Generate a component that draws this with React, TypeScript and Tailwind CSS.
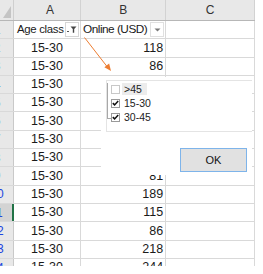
import React from "react";

const rows = [
  { n: 2, a: "15-30", b: "118" },
  { n: 3, a: "15-30", b: "86" },
  { n: 4, a: "15-30", b: "132" },
  { n: 5, a: "15-30", b: "97" },
  { n: 6, a: "15-30", b: "154" },
  { n: 7, a: "15-30", b: "120" },
  { n: 8, a: "15-30", b: "143" },
  { n: 9, a: "15-30", b: "81" },
  { n: 10, a: "15-30", b: "189" },
  { n: 11, a: "15-30", b: "115" },
  { n: 12, a: "15-30", b: "86" },
  { n: 13, a: "15-30", b: "218" },
  { n: 14, a: "15-30", b: "244" },
];

function FilterIcon() {
  return (
    <svg width="10" height="9" viewBox="0 0 10 9">
      <rect x="0" y="6" width="2" height="1" fill="#555" />
      <path d="M3.5 1.5h6l-2.3 2.6v3.6h-1.4V4.1z" fill="#444" />
    </svg>
  );
}

function Caret() {
  return (
    <svg width="7" height="4" viewBox="0 0 7 4">
      <path d="M0.5 0.5h6l-3 3z" fill="#7a7a7a" />
    </svg>
  );
}

function Check({ on }: { on: boolean }) {
  return (
    <span
      className={
        "flex h-[9px] w-[9px] shrink-0 items-center justify-center border bg-white " +
        (on ? "border-[#9a9a9a]" : "border-[#c8c8c8]")
      }
    >
      {on && (
        <svg width="7" height="6" viewBox="0 0 7 6">
          <path d="M0.8 3.1l1.8 1.8L6.2 1" stroke="#111" strokeWidth="1.5" fill="none" />
        </svg>
      )}
    </span>
  );
}

export default function App() {
  return (
    <div className="relative h-[274px] w-[263px] overflow-hidden bg-white font-['Liberation_Sans',Arial,sans-serif] text-[12.5px] text-[#1a1a1a]">
      {/* sheet */}
      <div className="h-[266px] w-[255px] overflow-hidden">
        <div className="ml-[-19px] flex flex-col">
          {/* column headers */}
          <div className="flex h-[21px] border-b border-[#b7b7b7] bg-[#e8e8e8] text-[12px] text-[#333]">
            <div className="relative w-[36px] border-r border-[#cfcfcf]">
              <svg className="absolute right-[2px] bottom-[2px]" width="8" height="12" viewBox="0 0 8 12">
                <path d="M8 0v12H0z" fill="#c4c4c4" />
              </svg>
            </div>
            <div className="flex w-[73px] items-center justify-center border-r border-[#d2d2d2] pl-[6px]">A</div>
            <div className="flex w-[93px] items-center justify-center border-r border-[#d2d2d2]">B</div>
            <div className="flex w-[97px] items-center justify-center border-r border-[#d2d2d2]">C</div>
          </div>

          {/* row 1: table header with filters */}
          <div className="flex h-[18.3px] border-b border-[#d9d9d9] whitespace-nowrap">
            <div className="flex w-[36px] items-center justify-center border-r border-[#c9c9c9] bg-[#e8e8e8] text-[12px] text-[#2046e0]">1</div>
            <div className="flex w-[73px] items-center justify-between border-r border-[#d9d9d9] pl-[3px] pr-[1px]">
              <span className="text-[11.4px] tracking-[-0.3px]">Age class</span>
              <span className="flex h-[15px] w-[14px] shrink-0 items-center justify-center border border-[#d6d6d6] bg-white">
                <FilterIcon />
              </span>
            </div>
            <div className="flex w-[93px] items-center justify-between overflow-hidden border-r border-[#d9d9d9] pl-[2px] pr-[1px]">
              <span className="text-[11.8px] tracking-[-0.5px]">Online (USD)</span>
              <span className="flex h-[15px] w-[14px] shrink-0 items-center justify-center border border-[#e0e0e0] bg-white">
                <Caret />
              </span>
            </div>
            <div className="w-[97px] border-r border-[#d9d9d9]" />
          </div>

          {rows.map((r) => {
            const active = r.n === 11;
            return (
              <div key={r.n} className="flex h-[18.3px] border-b border-[#d9d9d9]">
                <div
                  className={
                    "flex w-[36px] items-center justify-center text-[12px] text-[#2046e0] " +
                    (active
                      ? "border-r-2 border-[#217346] bg-[#d3d3d3]"
                      : "border-r border-[#c9c9c9] bg-[#e8e8e8]")
                  }
                >
                  {r.n}
                </div>
                <div className="flex w-[73px] items-center justify-center border-r border-[#d9d9d9]">{r.a}</div>
                <div className="flex w-[93px] items-center justify-end border-r border-[#d9d9d9] pr-[2px]">{r.b}</div>
                <div className="w-[97px] border-r border-[#d9d9d9]" />
              </div>
            );
          })}
        </div>
      </div>

      {/* filter dialog */}
      <div className="absolute left-[101px] top-[77px] flex h-[98px] w-[151px] flex-col bg-white pl-[5px] pt-[3px] text-[10.5px] text-[#222]">
        <div className="relative h-[52px] w-[146px] border border-r-0 border-[#e4e4e4] pt-[1px]">
          <div className="absolute left-0 top-[2px] h-[36px] w-[4px] border-b border-l border-[#a8a8a8]" />
          {[
            { label: ">45", on: false, hi: true },
            { label: "15-30", on: true, hi: false },
            { label: "30-45", on: true, hi: false },
          ].map((it) => (
            <div key={it.label} className="flex h-[14px] items-center gap-[2px] pl-[4px]">
              <Check on={it.on} />
              <span className={"px-[2px] leading-[12px] " + (it.hi ? "bg-[#ececec] pr-[5px]" : "")}>{it.label}</span>
            </div>
          ))}
        </div>
        <button className="mr-[5px] mt-[16px] flex h-[24px] w-[67px] items-center justify-center self-end border border-[#7eb4ea] bg-[#e1e1e1] text-[11px] text-[#111]">
          OK
        </button>
      </div>

      {/* annotation arrow */}
      <svg className="pointer-events-none absolute left-0 top-0" width="263" height="274" viewBox="0 0 263 274">
        <line x1="84.5" y1="37.5" x2="107" y2="66.5" stroke="#ed7d31" strokeWidth="1" />
        <polygon points="104.4,67.3 109.1,63.6 111,71" fill="#ed7d31" />
      </svg>
    </div>
  );
}
